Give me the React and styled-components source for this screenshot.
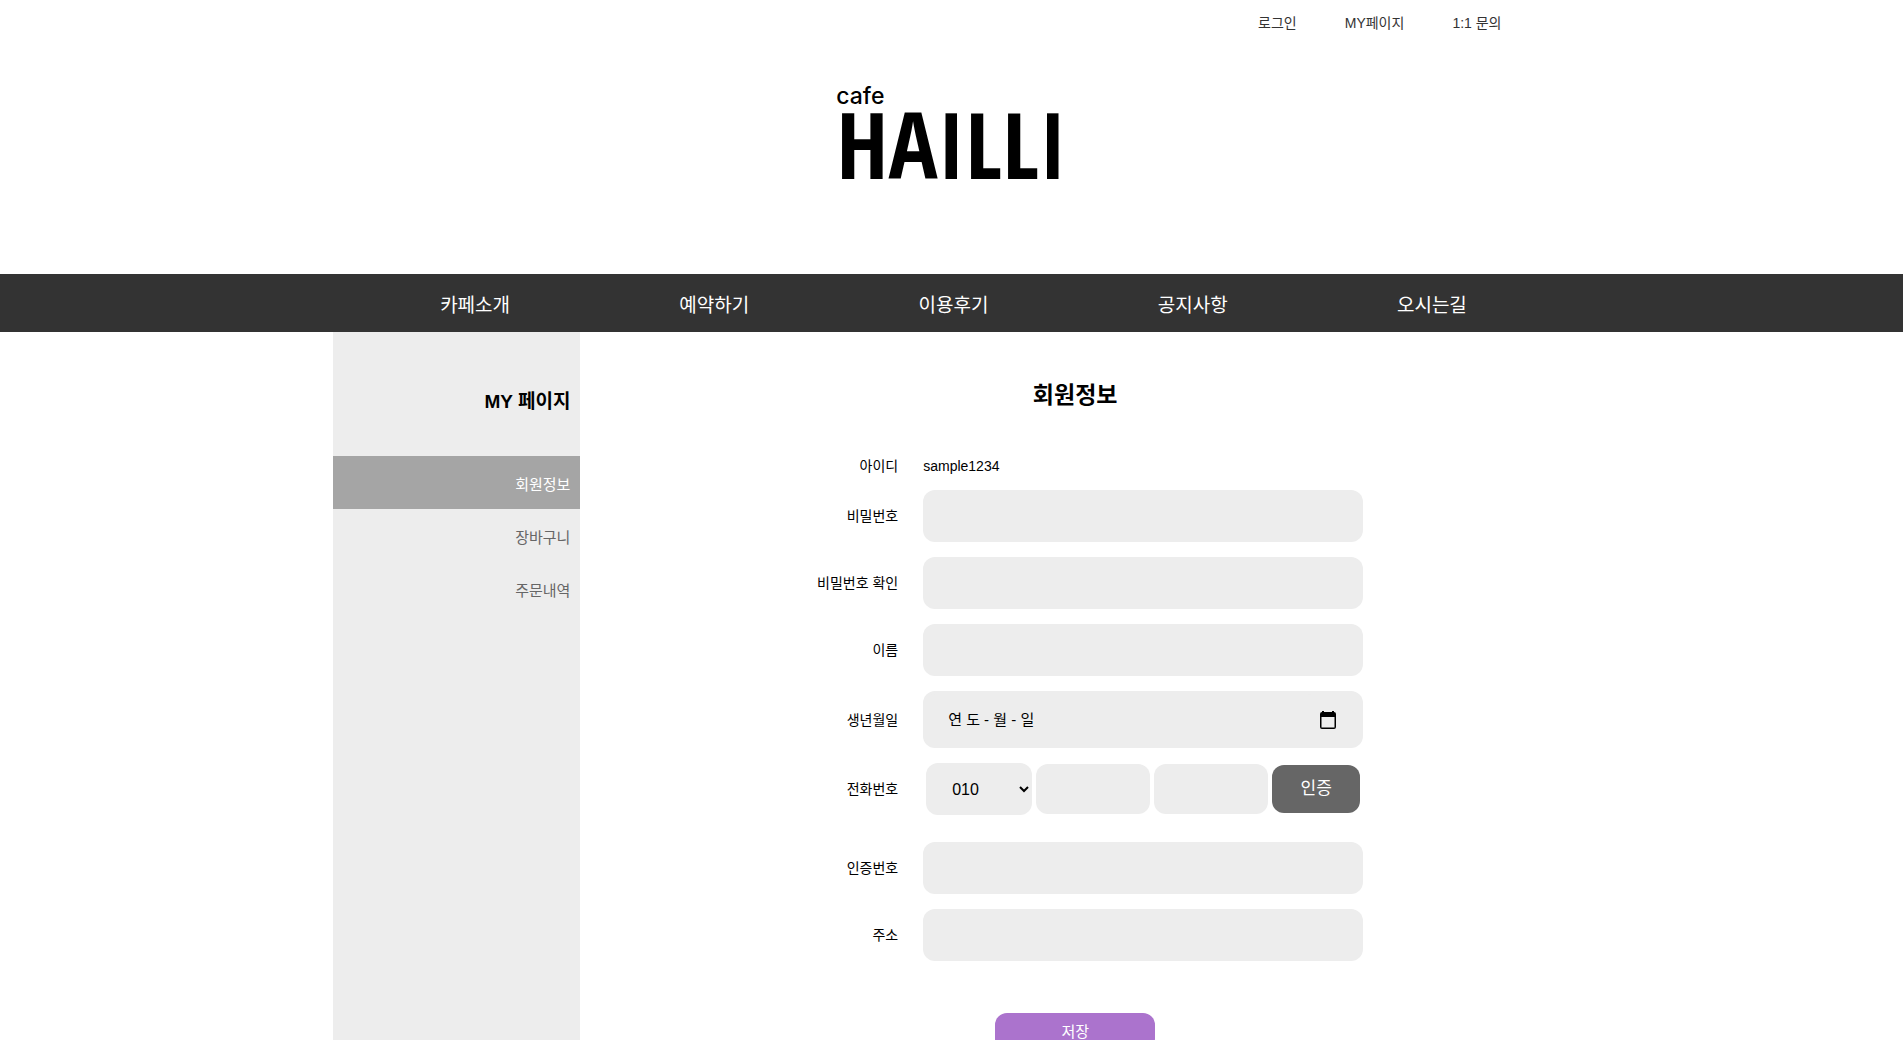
import React from "react";
import styled, { createGlobalStyle } from "styled-components";

const GlobalStyle = createGlobalStyle`
  * { box-sizing: border-box; }
  body {
    margin: 0;
    background: #fff;
    color: #000;
    font: 400 14px/18px "Liberation Sans", "Noto Sans CJK KR", sans-serif;
  }
  h1, h2, p, ul { margin: 0; padding: 0; }
  ul { list-style: none; }
  a { color: inherit; text-decoration: none; }
  input, select, button { margin: 0; border: 0; font: inherit; color: inherit; }
`;

const Header = styled.header`
  display: flex;
  flex-direction: column;
  align-items: center;
  height: 274px;
`;

const TopLinks = styled.nav`
  display: flex;
  justify-content: flex-end;
  gap: 48px;
  width: 100%;
  max-width: 1200px;
  padding: 14px 50px 0 0;
  color: #333;
`;

const Logo = styled.a`
  display: flex;
  flex-direction: column;
  margin-top: 52px;
  color: #000;
`;

const LogoSmall = styled.span`
  font: 500 23px/24px Inter, sans-serif;
`;

const LogoName = styled.span`
  font: 700 92px/72px "Liberation Sans Narrow", "Open Sans Condensed", serif;
`;

const NavBar = styled.nav`
  background: #333;
  color: #fff;
`;

const NavList = styled.ul`
  display: grid;
  grid-template-columns: repeat(5, 1fr);
  max-width: 1200px;
  margin: 0 auto;
  padding: 6px 0 0 4px;
  text-align: center;
  font-size: 19px;
  line-height: 52px;
`;

const Body = styled.div`
  display: flex;
  width: 65%;
  margin: 0 auto;
`;

const Sidebar = styled.aside`
  width: 20%;
  background: #ededed;
  text-align: right;
`;

const SideTitle = styled.h2`
  padding: 58px 10px 42px;
  font-size: 19px;
  line-height: 24px;
`;

const SideLink = styled.a`
  display: block;
  padding: 4px 10px 0;
  font-size: 15px;
  line-height: 49px;
  color: ${(p) => (p.$active ? "#fff" : "#666")};
  background: ${(p) => (p.$active ? "#a5a5a5" : "transparent")};
`;

const Main = styled.main`
  flex: 1;
  padding: 46px 0 60px;
`;

const Title = styled.h1`
  text-align: center;
  font-size: 23px;
  line-height: 34px;
`;

const Form = styled.form`
  display: flex;
  flex-direction: column;
  gap: 15px;
  width: 100%;
  max-width: 576px;
  margin: 45px auto 0;
`;

const Row = styled.div`
  display: grid;
  grid-template-columns: 111px 1fr;
  column-gap: 25px;
  align-items: center;
  padding-bottom: ${(p) => (p.$spaced ? 12 : 0)}px;
`;

const Label = styled.label`
  text-align: right;
  font-size: 14px;
`;

const Field = styled.input`
  width: 100%;
  min-width: 0;
  height: ${(p) => p.$height || 52}px;
  padding: 0 25px;
  border-radius: 12px;
  background: #ededed;
  &::placeholder { color: #000; opacity: 1; }
`;

const DateBox = styled.div`
  display: flex;
  align-items: center;
  height: 57px;
  padding-right: 27px;
  border-radius: 12px;
  background: #ededed;
  font-size: 15px;
`;

const IconButton = styled.button`
  display: flex;
  padding: 0;
  background: none;
`;

const Phone = styled.div`
  display: grid;
  grid-template-columns: 106px 1fr 1fr 88px;
  gap: 4px;
  padding: 0 3px;
  align-items: center;
`;

const Select = styled.select`
  height: 52px;
  padding-left: 22px;
  border-radius: 12px;
  background: #ededed;
  font-size: 16px;
`;

const VerifyButton = styled.button`
  height: 48px;
  border-radius: 12px;
  background: #666;
  color: #fff;
  font-size: 17px;
`;

const SaveButton = styled.button`
  align-self: center;
  width: 160px;
  height: 38px;
  margin-top: 37px;
  border-radius: 12px;
  background: #ab73cd;
  color: #fff;
  font-size: 15px;
`;

const MENU = ["카페소개", "예약하기", "이용후기", "공지사항", "오시는길"];
const SIDE = ["회원정보", "장바구니", "주문내역"];

function TextRow({ id, label, type = "text" }) {
  return (
    <Row>
      <Label htmlFor={id}>{label}</Label>
      <Field id={id} type={type} />
    </Row>
  );
}

function CalendarIcon() {
  return (
    <svg width="16" height="18" viewBox="0 0 16 18" aria-hidden="true">
      <path
        fill="#000"
        fillRule="evenodd"
        d="M2 0h2v1h8V0h2v1a2 2 0 0 1 2 2v13a2 2 0 0 1-2 2H2a2 2 0 0 1-2-2V3a2 2 0 0 1 2-2zM1.500 6v10.500h13V6z"
      />
    </svg>
  );
}

export default function App() {
  return (
    <>
      <GlobalStyle />
      <Header>
        <TopLinks>
          <a href="#login">로그인</a>
          <a href="#mypage">MY페이지</a>
          <a href="#ask">1:1 문의</a>
        </TopLinks>
        <Logo href="#home">
          <LogoSmall>cafe</LogoSmall>
          <LogoName>HAILLI</LogoName>
        </Logo>
      </Header>
      <NavBar>
        <NavList>
          {MENU.map((item) => (
            <li key={item}>
              <a href="#menu">{item}</a>
            </li>
          ))}
        </NavList>
      </NavBar>
      <Body>
        <Sidebar>
          <SideTitle>MY 페이지</SideTitle>
          <ul>
            {SIDE.map((item, i) => (
              <li key={item}>
                <SideLink href="#side" $active={i === 0}>{item}</SideLink>
              </li>
            ))}
          </ul>
        </Sidebar>
        <Main>
          <Title>회원정보</Title>
          <Form onSubmit={(e) => e.preventDefault()}>
            <Row>
              <Label as="span">아이디</Label>
              <span>sample1234</span>
            </Row>
            <TextRow id="password" label="비밀번호" type="password" />
            <TextRow id="confirm" label="비밀번호 확인" type="password" />
            <TextRow id="name" label="이름" />
            <Row>
              <Label htmlFor="birth">생년월일</Label>
              <DateBox>
                <Field id="birth" type="text" placeholder="연 도 - 월 - 일" />
                <IconButton type="button" aria-label="달력">
                  <CalendarIcon />
                </IconButton>
              </DateBox>
            </Row>
            <Row $spaced>
              <Label htmlFor="phone">전화번호</Label>
              <Phone>
                <Select id="phone" defaultValue="010">
                  <option>010</option>
                  <option>011</option>
                </Select>
                <Field $height={50} type="tel" aria-label="전화번호 가운데 자리" />
                <Field $height={50} type="tel" aria-label="전화번호 끝 자리" />
                <VerifyButton type="button">인증</VerifyButton>
              </Phone>
            </Row>
            <TextRow id="code" label="인증번호" />
            <TextRow id="address" label="주소" />
            <SaveButton type="submit">저장</SaveButton>
          </Form>
        </Main>
      </Body>
    </>
  );
}
